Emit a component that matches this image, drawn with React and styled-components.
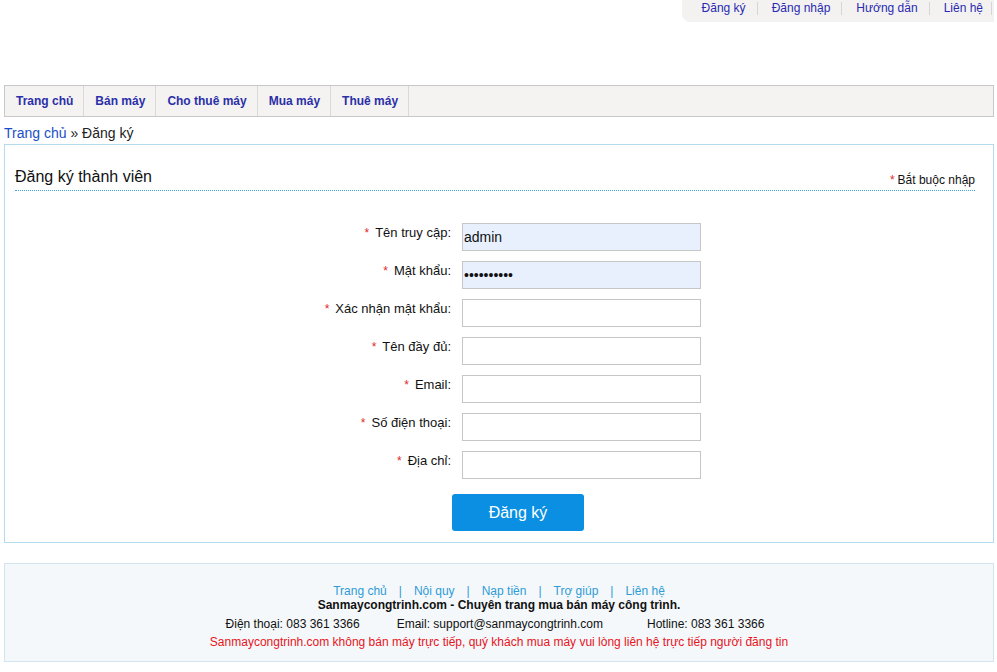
import React from 'react'
import styled, { createGlobalStyle } from 'styled-components'

const GlobalStyle = createGlobalStyle`
  body {
    margin: 0;
    background: #fff;
    font-family: "Liberation Sans", Arial, sans-serif;
    font-size: 12px;
    color: #222;
  }
`

const fields = [
  { label: 'Tên truy cập:', value: 'admin', filled: true },
  { label: 'Mật khẩu:', value: '••••••••••', filled: true },
  { label: 'Xác nhận mật khẩu:' },
  { label: 'Tên đầy đủ:' },
  { label: 'Email:' },
  { label: 'Số điện thoại:' },
  { label: 'Địa chỉ:' },
]

const topLinks = ['Đăng ký', 'Đăng nhập', 'Hướng dẫn', 'Liên hệ']
const menu = ['Trang chủ', 'Bán máy', 'Cho thuê máy', 'Mua máy', 'Thuê máy']
const footerLinks = ['Trang chủ', 'Nội quy', 'Nạp tiền', 'Trợ giúp', 'Liên hệ']

const App = () => {
  return (
    <Page>
      <GlobalStyle />
      <Header>
        <TopBar>
          {topLinks.map((t) => (
            <TopLink key={t}>{t}</TopLink>
          ))}
        </TopBar>
      </Header>
      <Menu>
        {menu.map((m) => (
          <MenuItem key={m}>{m}</MenuItem>
        ))}
      </Menu>
      <Breadcrumb>
        <CrumbLink>Trang chủ</CrumbLink> » Đăng ký
      </Breadcrumb>
      <FormBox>
        <TitleRow>
          <Title>Đăng ký thành viên</Title>
          <Required><Star $tight>*</Star>Bắt buộc nhập</Required>
        </TitleRow>
        <Rows>
          {fields.map((f) => (
            <Row key={f.label}>
              <Label><Star>*</Star>{f.label}</Label>
              <Input $filled={f.filled}>{f.value}</Input>
            </Row>
          ))}
        </Rows>
        <ButtonRow>
          <Submit>Đăng ký</Submit>
        </ButtonRow>
      </FormBox>
      <Footer>
        <FooterLinks>
          {footerLinks.map((l, i) => (
            <React.Fragment key={l}>
              {i > 0 && <Pipe>|</Pipe>}
              <FooterLink>{l}</FooterLink>
            </React.Fragment>
          ))}
        </FooterLinks>
        <Slogan>Sanmaycongtrinh.com - Chuyên trang mua bán máy công trình.</Slogan>
        <Contacts>
          <span>Điện thoại: 083 361 3366</span>
          <Contact $gap={37}>Email: support@sanmaycongtrinh.com</Contact>
          <Contact $gap={44}>Hotline: 083 361 3366</Contact>
        </Contacts>
        <Warning>Sanmaycongtrinh.com không bán máy trực tiếp, quý khách mua máy vui lòng liên hệ trực tiếp người đăng tin</Warning>
      </Footer>
    </Page>
  )
}

const Page = styled.div`
  width: 990px;
  margin-left: 4px;
  padding-bottom: 10px;
`

const Header = styled.div`
  height: 85px;
  display: flex;
  justify-content: flex-end;
  align-items: flex-start;
`

const TopBar = styled.div`
  display: flex;
  flex-shrink: 0;
  align-items: center;
  height: 22px;
  padding-left: 6px;
  padding-right: 2px;
  background: #f3f2f1;
  border-bottom-left-radius: 8px;
  white-space: nowrap;
`

const TopLink = styled.a`
  color: #2a2ab0;
  font-size: 12px;
  padding: 0 11px 0 14px;
  border-right: 1px solid #d6d6d6;
  line-height: 13px;
  margin-top: -5px;
  &:last-child { padding-right: 8px; }
`

const Menu = styled.div`
  display: flex;
  height: 30px;
  border: 1px solid #c8c8c8;
  background: #f4f3f2;
`

const MenuItem = styled.a`
  display: flex;
  align-items: center;
  padding: 0 10px 0 11px;
  border-right: 1px solid #d9d9d9;
  font-weight: bold;
  font-size: 12px;
  color: #2b2fa8;
`

const Breadcrumb = styled.div`
  height: 27px;
  line-height: 32px;
  font-size: 14px;
  color: #222;
`

const CrumbLink = styled.a`
  color: #1a4ec8;
`

const FormBox = styled.div`
  border: 1px solid #b6dbee;
  padding: 0 18px 11px 10px;
  height: 399px;
  box-sizing: border-box;
`

const TitleRow = styled.div`
  display: flex;
  justify-content: space-between;
  align-items: flex-end;
  margin-top: 22px;
  padding-bottom: 3px;
  border-bottom: 1px dotted #3fa8d6;
`

const Title = styled.div`
  font-size: 16px;
  color: #111;
  line-height: 20px;
`

const Required = styled.div`
  font-size: 12px;
  color: #111;
  line-height: 14px;
`

const Star = styled.span`
  color: #e02828;
  font-size: 12px;
  margin-right: ${(p) => (p.$tight ? '3px' : '6px')};
`

const Rows = styled.div`
  display: flex;
  flex-direction: column;
  gap: 10px;
  margin-top: 32px;
`

const Row = styled.div`
  display: flex;
  align-items: flex-start;
  gap: 11px;
`

const Label = styled.div`
  width: 436px;
  text-align: right;
  font-size: 13px;
  color: #111;
  padding-top: 2px;
`

const Input = styled.div`
  width: 239px;
  height: 28px;
  box-sizing: border-box;
  border: 1px solid #c6c6c6;
  background: ${(p) => (p.$filled ? '#e8f0fe' : '#fff')};
  font-size: 14px;
  line-height: 26px;
  padding-left: 1px;
  color: #111;
`

const ButtonRow = styled.div`
  display: flex;
  padding-left: 437px;
  margin-top: 15px;
`

const Submit = styled.button`
  width: 132px;
  height: 37px;
  border: none;
  border-radius: 3px;
  background: #0a8fe2;
  color: #fff;
  font-family: "Liberation Sans", Arial, sans-serif;
  font-size: 16px;
`

const Footer = styled.div`
  margin-top: 20px;
  height: 99px;
  box-sizing: border-box;
  border: 1px solid #d2e4ef;
  background: #f4f8fb;
  padding-top: 20px;
  display: flex;
  flex-direction: column;
  align-items: center;
  font-size: 12px;
`

const FooterLinks = styled.div`
  display: flex;
  gap: 10px;
  line-height: 14px;
  color: #2f9bd6;
`

const FooterLink = styled.a`
  color: #2f9bd6;
`

const Pipe = styled.span`
  color: #2f9bd6;
  padding: 0 2px;
`

const Slogan = styled.div`
  font-weight: bold;
  color: #111;
  line-height: 14px;
`

const Contacts = styled.div`
  display: flex;
  color: #111;
  line-height: 18px;
  margin-top: 3px;
  margin-right: 8px;
`

const Contact = styled.span`
  margin-left: ${(p) => p.$gap}px;
`

const Warning = styled.div`
  color: #e8141b;
  line-height: 18px;
`

export default App
